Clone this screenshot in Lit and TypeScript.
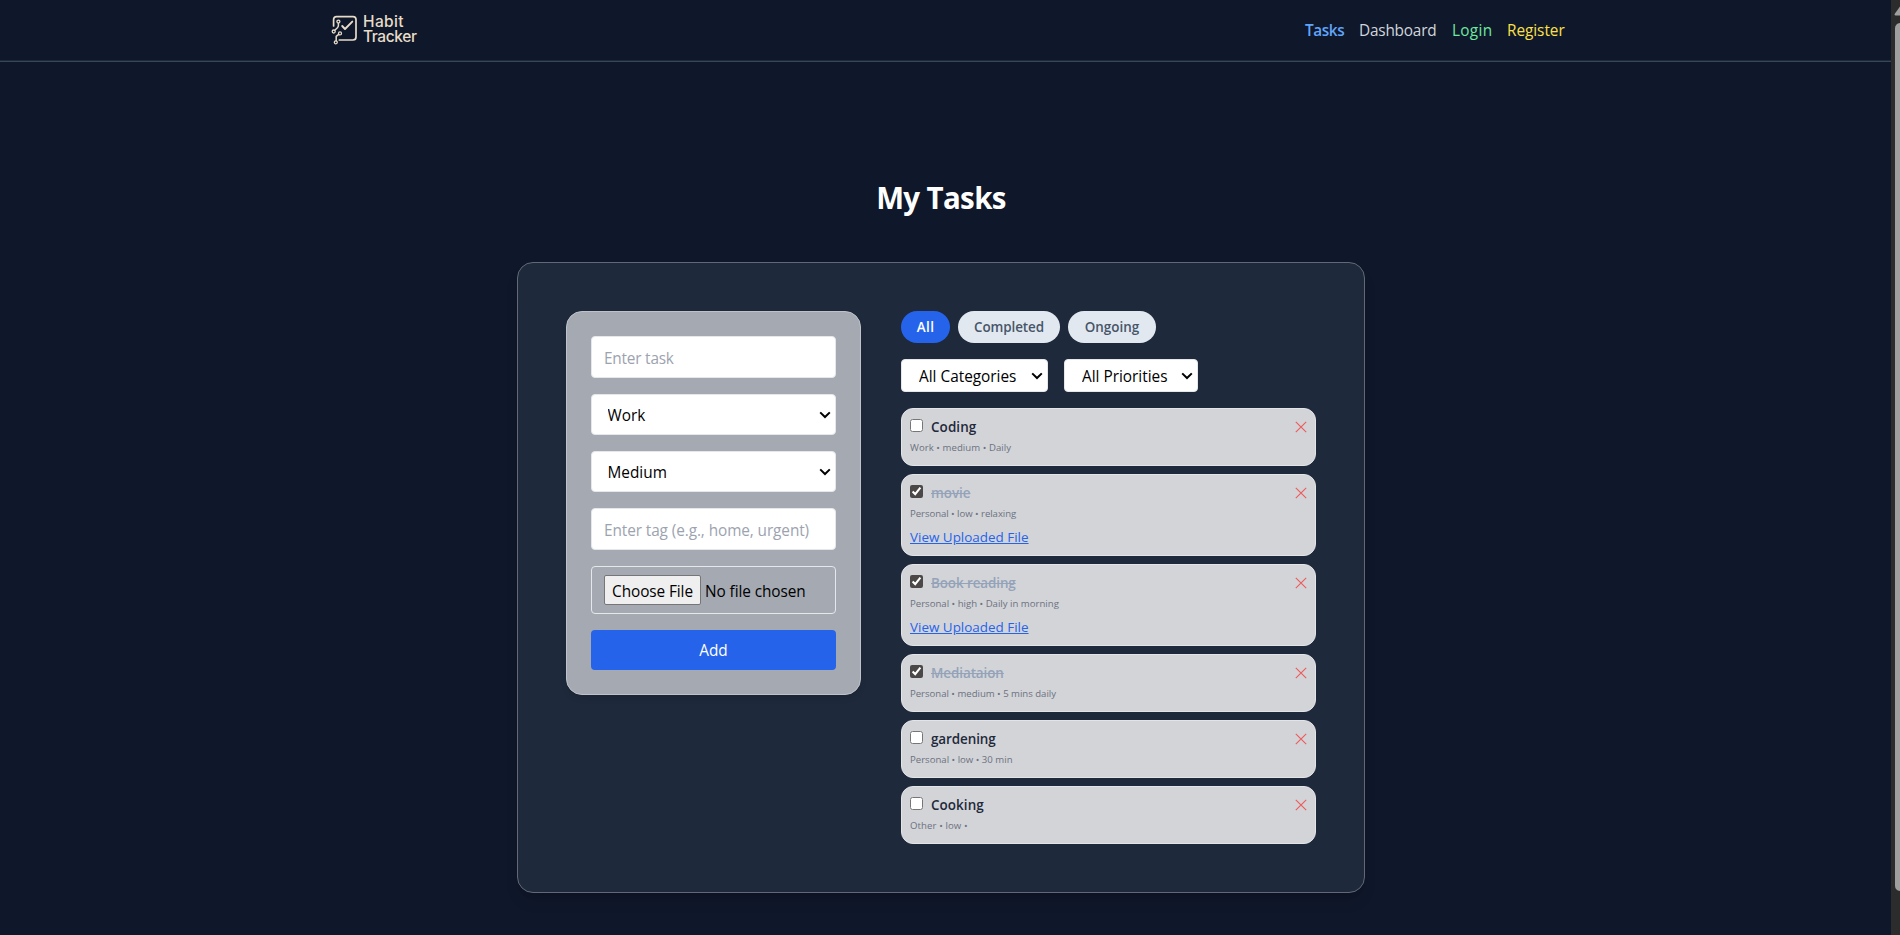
import { LitElement, html, css, nothing } from "lit";
import { customElement, state } from "lit/decorators.js";
import { classMap } from "lit/directives/class-map.js";
import { styleMap } from "lit/directives/style-map.js";

interface Task {
  title: string;
  meta: string;
  done: boolean;
  file?: boolean;
  tracking?: number;
  metaTracking?: number;
}

@customElement("app-root")
export class AppRoot extends LitElement {
  static styles = css`
    :host {
      display: flex;
      height: 935px;
      overflow: hidden;
      background: #0f172a;
      font-family: "Open Sans", "Noto Sans", sans-serif;
      font-size: 15.36px;
      line-height: 24px;
      color: #000;
    }
    * { box-sizing: border-box; }
    .page { width: 1882px; flex: none; }
    .track {
      margin-left: 9px;
      width: 9px;
      background: #2c2c2c;
      overflow: hidden;
    }
    .track svg { display: block; }
    header {
      height: 62px;
      border-bottom: 1px solid #38465a;
      box-shadow: inset 0 -1px #1d293c;
      width: 1891px;
      padding: 0 326px 0 330px;
      display: flex;
      justify-content: space-between;
      align-items: flex-start;
    }
    .logo { display: flex; padding-top: 12px; color: #e6dcc8; }
    .logo-name {
      margin: 2px 0 0 3px;
      font: 500 15.5px/15px Inter, sans-serif;
    }
    .logo-name span { display: block; }
    .habit { letter-spacing: 0.35px; }
    .tracker { letter-spacing: -0.4px; }
    nav { display: flex; padding-top: 19px; }
    nav a { display: block; white-space: nowrap; }
    .n-tasks { width: 54px; font-weight: 600; font-stretch: 89%; letter-spacing: -0.4px; color: #60a5fa; }
    .n-dash { width: 93px; color: #d1d5db; letter-spacing: -0.2px; }
    .n-login { width: 55px; color: #6ee7a0; letter-spacing: 0.3px; }
    .n-reg { width: 58px; color: #fde047; letter-spacing: -0.05px; }
    h1 {
      margin: 116px 0 0;
      font-size: 29.5px;
      line-height: 40px;
      font-weight: 700;
      font-stretch: 94%;
      letter-spacing: -0.65px;
      color: #fff;
      text-align: center;
    }
    .card {
      width: 848px;
      margin: 44px 0 0 517px;
      padding: 48px;
      border: 1px solid #626976;
      border-radius: 16px;
      background: #1e293b;
      box-shadow: 0 10px 15px -3px rgba(0, 0, 0, 0.12), 0 4px 6px -4px rgba(0, 0, 0, 0.12);
      display: grid;
      grid-template-columns: 295px 415px;
      column-gap: 40px;
      align-items: start;
    }
    .form {
      padding: 24px;
      border: 1px solid #bfc3c9;
      border-radius: 16px;
      background: #a5a9b2;
      box-shadow: 0 4px 6px -1px rgba(0, 0, 0, 0.12);
      display: flex;
      flex-direction: column;
      gap: 16px;
    }
    input, select, button {
      font: inherit;
      margin: 0;
      color: #000;
    }
    .field {
      display: block;
      width: 100%;
      border: 1px solid #e5e7eb;
      border-radius: 4px;
      background: #fff;
    }
    input.field { height: 42px; padding: 9px 12px 7px; outline: none; }
    input.field::placeholder { color: #9ca3af; opacity: 1; }
    .f-task { letter-spacing: -0.2px; }
    .f-tag { letter-spacing: -0.09px; }
    .pick { position: relative; }
    .pick svg {
      position: absolute;
      right: 5px;
      top: 17px;
      width: 12px;
      height: 8px;
      pointer-events: none;
    }
    select.field { appearance: none; height: 41px; padding: 9px 30px 6px 15.5px; }
    input.field.upload { height: 48px; padding: 8px 12px; background: transparent; letter-spacing: -0.08px; }
    .upload::file-selector-button {
      font: inherit;
      width: 97px;
      height: 30px;
      padding: 3px 0 0;
      margin: 0 4px 0 0;
      border: 1px solid #767676;
      border-radius: 2px;
      background: #efefef;
      color: #000;
      letter-spacing: -0.08px;
    }
    .add {
      height: 40px;
      padding: 2px 0 0;
      border: 0;
      border-radius: 4px;
      background: #2563eb;
      color: #fff;
    }
    .pills { display: flex; gap: 8px; }
    .pill {
      height: 32px;
      padding: 0;
      border: 0;
      border-radius: 16px;
      background: #e2e8f0;
      color: #475569;
      font-size: 13.44px;
      font-weight: 600;
      line-height: 20px;
    }
    .pill.on { background: #2563eb; color: #fff; }
    .p-all { width: 49px; letter-spacing: 0.4px; }
    .p-completed { width: 102px; letter-spacing: -0.09px; }
    .p-ongoing { width: 88px; }
    .filters { display: flex; gap: 16px; margin: 16px 0; }
    .filters select.field { height: 33px; padding: 5px 20px 2px 17px; letter-spacing: 0; }
    .filters .cat { width: 147px; }
    .filters .pri { width: 134px; }
    .filters .pick svg { top: 13px; }
    .list { display: flex; flex-direction: column; gap: 8px; }
    .item {
      min-height: 58px;
      padding: 8px;
      border: 1px solid #e2e4e8;
      border-radius: 12px;
      background: #d3d4d8;
    }
    .row { display: flex; height: 20px; }
    .row input { width: 13px; height: 13px; margin: 2px 8px 0 0; accent-color: #4b4847; }
    .title {
      flex: 1;
      font-size: 13.44px;
      font-weight: 600;
      line-height: 20px;
      color: #1e293b;
    }
    .title.done { color: #94a3b8; text-decoration: line-through; }
    .del { margin: 4px 0.5px 0 0; width: 12px; height: 12px; }
    .meta { margin-top: 3px; font-size: 9.6px; line-height: 15px; color: #6b7280; }
    .link {
      display: block;
      margin-top: 6px;
      font-size: 13.44px;
      line-height: 20px;
      color: #2563eb;
      text-decoration: underline;
    }
  `;

  @state() private tasks: Task[] = [
    { title: "Coding", meta: "Work • medium • Daily", done: false, tracking: 0.08, metaTracking: 0.05 },
    { title: "movie", meta: "Personal • low • relaxing", done: true, file: true, tracking: -0.06, metaTracking: -0.05 },
    { title: "Book reading", meta: "Personal • high • Daily in morning", done: true, file: true, tracking: -0.1, metaTracking: 0 },
    { title: "Mediataion", meta: "Personal • medium • 5 mins daily", done: true, tracking: -0.08, metaTracking: -0.02 },
    { title: "gardening", meta: "Personal • low • 30 min", done: false, tracking: -0.08, metaTracking: 0 },
    { title: "Cooking", meta: "Other • low •", done: false, tracking: 0.06, metaTracking: 0.1 },
  ];

  private renderPick(label: string, cls = "") {
    return html`<div class="pick ${cls}">
      <select class="field"><option>${label}</option></select>
      <svg viewBox="0 0 12 8" fill="none" stroke="#000" stroke-width="2"><path d="M1.2 1.4 6 6 10.8 1.4" /></svg>
    </div>`;
  }

  private renderTask(t: Task) {
    return html`<div class="item">
      <div class="row">
        <input type="checkbox" .checked=${t.done} />
        <span class=${classMap({ title: true, done: t.done })} style=${styleMap({ letterSpacing: `${t.tracking ?? 0}px` })}>${t.title}</span>
        <svg class="del" viewBox="0 0 12 12" fill="none" stroke="#ee5a5a" stroke-width="1.1">
          <path d="M.8 .8 11.2 11.2M11.2 .8 .8 11.2" />
        </svg>
      </div>
      <div class="meta" style=${styleMap({ letterSpacing: `${t.metaTracking ?? 0}px` })}>${t.meta}</div>
      ${t.file ? html`<a class="link">View Uploaded File</a>` : nothing}
    </div>`;
  }

  render() {
    return html`
      <div class="page">
        <header>
          <div class="logo">
            <svg width="30" height="34" viewBox="0 0 30 34" fill="none" stroke="currentColor" stroke-width="1.7" stroke-linecap="round" stroke-linejoin="round">
              <path d="M3.6 14V7.6Q3.6 4.6 6.6 4.6H23Q26 4.6 26 7.6V25Q26 28 23 28H9.3" />
              <path d="M12.2 14 15 17 22.3 9.6" stroke-width="1.9" />
              <path d="M8.4 11.2V13.6Q8.4 15 7.2 16L4.8 18.2M8.7 22.4 6.2 24.4V28.8" stroke-width="1.5" />
              <circle cx="8.4" cy="9.6" r="1.5" stroke-width="1.3" />
              <circle cx="3.7" cy="19.5" r="1.5" stroke-width="1.3" />
              <circle cx="10" cy="21.4" r="1.5" stroke-width="1.3" />
              <circle cx="5.8" cy="30.3" r="1.5" stroke-width="1.3" />
            </svg>
            <div class="logo-name"><span class="habit">Habit</span><span class="tracker">Tracker</span></div>
          </div>
          <nav>
            <a class="n-tasks">Tasks</a>
            <a class="n-dash">Dashboard</a>
            <a class="n-login">Login</a>
            <a class="n-reg">Register</a>
          </nav>
        </header>
        <h1>My Tasks</h1>
        <div class="card">
          <div class="form">
            <input class="field f-task" placeholder="Enter task" />
            ${this.renderPick("Work")} ${this.renderPick("Medium")}
            <input class="field f-tag" placeholder="Enter tag (e.g., home, urgent)" />
            <input class="field upload" type="file" />
            <button class="add">Add</button>
          </div>
          <div>
            <div class="pills">
              <button class="pill on p-all">All</button>
              <button class="pill p-completed">Completed</button>
              <button class="pill p-ongoing">Ongoing</button>
            </div>
            <div class="filters">
              ${this.renderPick("All Categories", "cat")} ${this.renderPick("All Priorities", "pri")}
            </div>
            <div class="list">${this.tasks.map((t) => this.renderTask(t))}</div>
          </div>
        </div>
      </div>
      <div class="track">
        <svg width="9" height="935" viewBox="0 0 9 935" fill="#9f9f9f">
          <path d="M9 6.6 3.6 14Q3.2 15.4 4.4 15.6H9Z" />
          <path d="M9 23Q4 23.6 4 28.5V885.5Q4 890.4 9 891Z" />
        </svg>
      </div>
    `;
  }
}
